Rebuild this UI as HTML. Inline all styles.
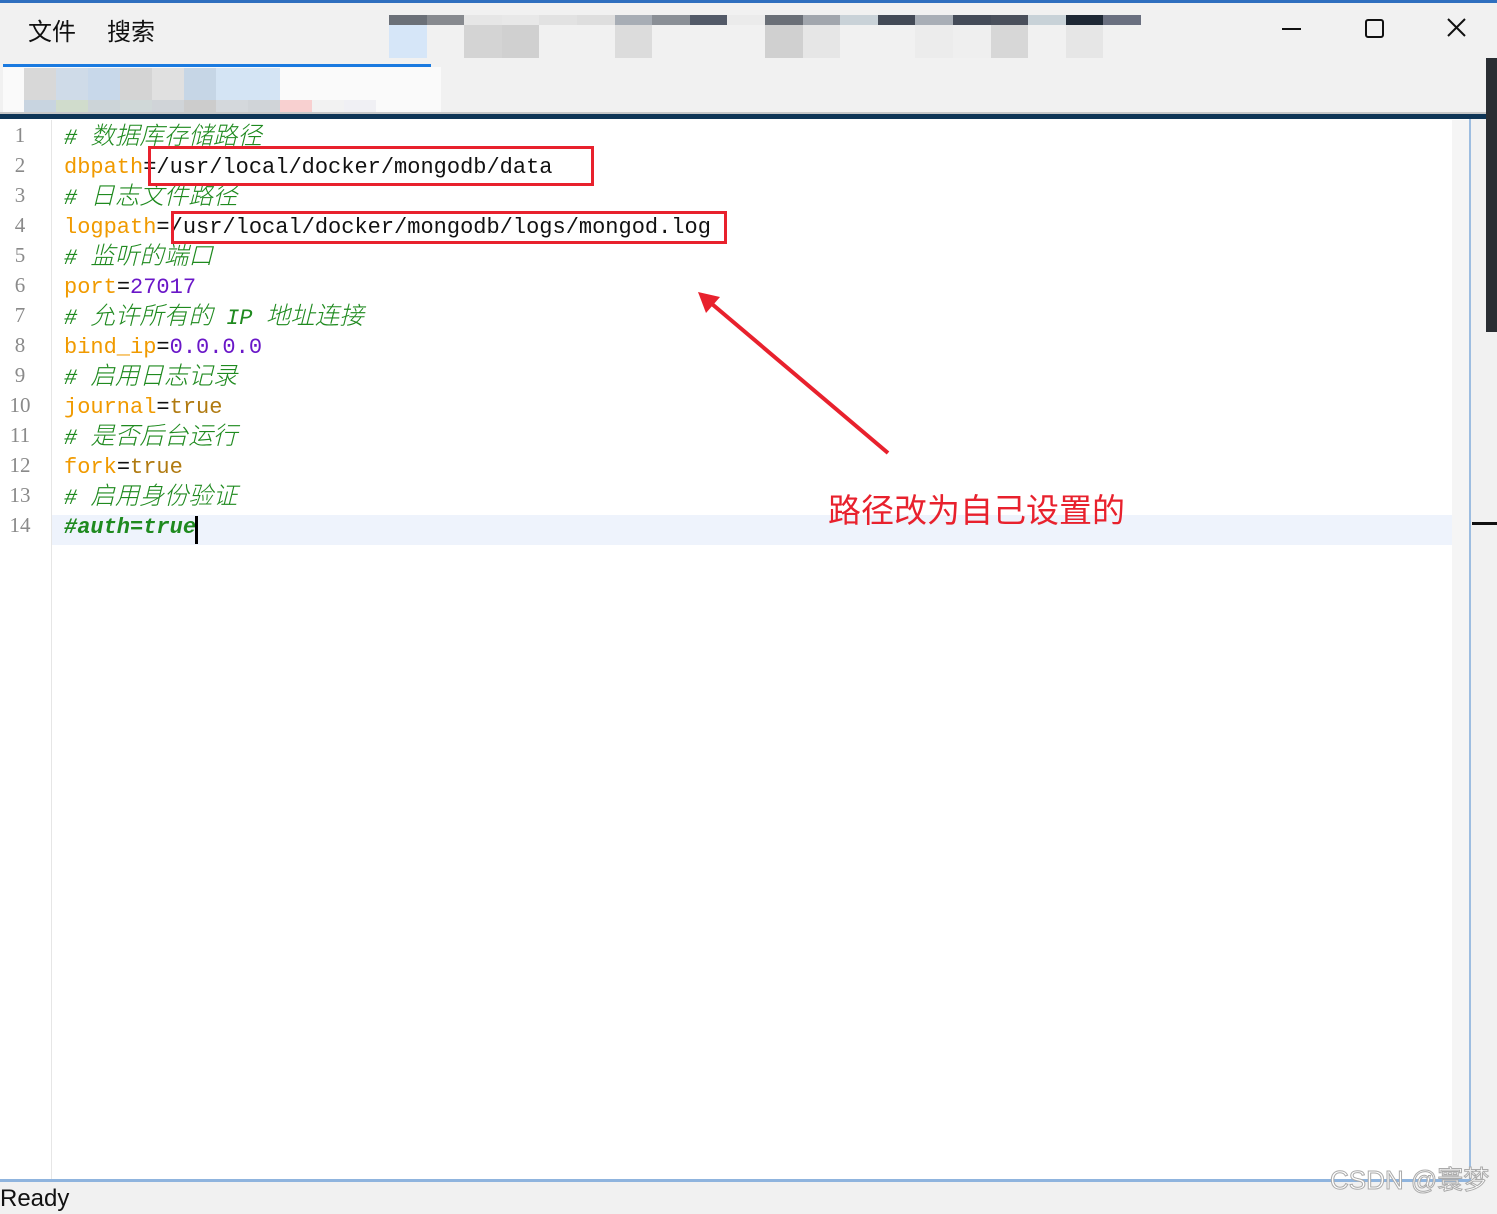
<!DOCTYPE html>
<html><head><meta charset="utf-8"><style>
*{margin:0;padding:0;box-sizing:border-box}
html,body{width:1497px;height:1205px}
body{background:#f1f1f1;position:relative;overflow:hidden;font-family:"Liberation Sans","Noto Sans CJK SC",sans-serif}
.abs{position:absolute}
.row{display:flex;position:absolute}
.row div{flex:1}
.code{position:absolute;left:64px;font-family:"Liberation Mono","Noto Sans CJK SC",monospace;font-size:22px}
.code div{height:30px;line-height:30px;overflow:visible;white-space:pre}
.ln{position:absolute;left:0;width:40px;text-align:center;font-family:"Liberation Serif",serif;font-size:21px;color:#8a8a8a;line-height:30px}
.c{color:#1f8a1f;font-style:italic}
.z{font-size:24.5px;font-family:"Noto Sans CJK SC",sans-serif;font-weight:300;line-height:1;vertical-align:baseline}
.k{color:#f09a00}
.n{color:#6a17c8}
.t{color:#b07a10}
.b{color:#111}
</style></head><body>
<div class="abs" style="left:0;top:0;width:1497px;height:3px;background:#2f6fbf"></div>
<div class="abs" style="left:28px;top:12px;font-size:24px;color:#111">文件</div>
<div class="abs" style="left:107px;top:12px;font-size:24px;color:#111">搜索</div>
<div class="row" style="left:389px;top:15px;width:752px;height:10px">
<div style="background:#6b7078"></div><div style="background:#878a8f"></div><div style="background:#e6e6e6"></div><div style="background:#e8e8e8"></div><div style="background:#e2e2e2"></div><div style="background:#dedede"></div><div style="background:#a7adb5"></div><div style="background:#8a8f96"></div><div style="background:#535a68"></div><div style="background:#ebebeb"></div><div style="background:#6a6f77"></div><div style="background:#a1a6ad"></div><div style="background:#c9d2d8"></div><div style="background:#434a56"></div><div style="background:#a8aeb6"></div><div style="background:#444b58"></div><div style="background:#4a505c"></div><div style="background:#c8d2d8"></div><div style="background:#1e2835"></div><div style="background:#6a7080"></div></div>
<div class="row" style="left:389px;top:25px;width:752px;height:33px">
<div style="background:#d6e6f8"></div><div></div><div style="background:#d4d4d4"></div><div style="background:#d0d0d0"></div><div></div><div></div><div style="background:#dcdcdc"></div><div></div><div></div><div></div><div style="background:#d0d0d0"></div><div style="background:#e6e6e6"></div><div></div><div></div><div style="background:#ececec"></div><div style="background:#efefef"></div><div style="background:#d7d7d7"></div><div></div><div style="background:#e6e6e6"></div><div></div></div>
<svg class="abs" style="left:1270px;top:14px" width="210" height="30"><path d="M12 15H31" stroke="#111" stroke-width="2"/><rect x="96" y="6" width="17" height="17" rx="2" fill="none" stroke="#111" stroke-width="2"/><path d="M178 5L195 22M195 5L178 22" stroke="#111" stroke-width="2"/></svg>
<div class="abs" style="left:3px;top:64px;width:428px;height:3px;background:#1a7ae0"></div>
<div class="abs" style="left:3px;top:67px;width:438px;height:49px;background:#fafafa"></div>
<div class="row" style="left:24px;top:68px;width:256px;height:32px">
<div style="background:#d8d8d8"></div><div style="background:#cfdbe8"></div><div style="background:#c8d8ea"></div><div style="background:#d4d4d4"></div><div style="background:#e0e0e0"></div><div style="background:#c6d6e6"></div><div style="background:#d4e4f4"></div><div style="background:#d4e4f4"></div></div>
<div class="row" style="left:24px;top:100px;width:384px;height:16px">
<div style="background:#c8d4e0"></div><div style="background:#d0dccc"></div><div style="background:#ccd4d8"></div><div style="background:#d0d8d8"></div><div style="background:#d0d4d8"></div><div style="background:#cccccc"></div><div style="background:#d4d8dc"></div><div style="background:#d0d4d8"></div><div style="background:#f8d0d0"></div><div style="background:#f2f2f2"></div><div style="background:#f0f0f4"></div><div style="background:#fafafa"></div></div>
<div class="abs" style="left:0;top:112px;width:1486px;height:2px;background:#c8c8c8"></div>
<div class="abs" style="left:0;top:114px;width:1486px;height:5px;background:#0e3556"></div>
<div class="abs" style="left:1486px;top:58px;width:11px;height:274px;background:#2a2e33"></div>
<div class="abs" style="left:1472px;top:522px;width:25px;height:3px;background:#111"></div>
<div class="abs" style="left:0;top:119px;width:1471px;height:1061px;background:#fff;border-right:2px solid #9dbde0"></div>
<div class="abs" style="left:1452px;top:120px;width:17px;height:1060px;background:#f5f5f5"></div>
<div class="abs" style="left:51px;top:120px;width:1px;height:1060px;background:#e6e6e6"></div>
<div class="abs" style="left:52px;top:515px;width:1400px;height:30px;background:#eef3fc"></div>
<div class="ln" style="top:120px">1<br>2<br>3<br>4<br>5<br>6<br>7<br>8<br>9<br>10<br>11<br>12<br>13<br>14</div>
<div class="code" style="top:123px"><div><span class="c"># <span class="z">数据库存储路径</span></span></div><div><span class="k">dbpath</span><span class="b">=/usr/local/docker/mongodb/data</span></div><div><span class="c"># <span class="z">日志文件路径</span></span></div><div><span class="k">logpath</span><span class="b">=/usr/local/docker/mongodb/logs/mongod.log</span></div><div><span class="c"># <span class="z">监听的端口</span></span></div><div><span class="k">port</span><span class="b">=</span><span class="n">27017</span></div><div><span class="c"># <span class="z">允许所有的</span> IP <span class="z">地址连接</span></span></div><div><span class="k">bind_ip</span><span class="b">=</span><span class="n">0.0.0.0</span></div><div><span class="c"># <span class="z">启用日志记录</span></span></div><div><span class="k">journal</span><span class="b">=</span><span class="t">true</span></div><div><span class="c"># <span class="z">是否后台运行</span></span></div><div><span class="k">fork</span><span class="b">=</span><span class="t">true</span></div><div><span class="c"># <span class="z">启用身份验证</span></span></div><div><span class="c" style="font-weight:bold">#auth=true</span></div></div>
<div class="abs" style="left:195px;top:516px;width:3px;height:28px;background:#000"></div>
<div class="abs" style="left:148px;top:146px;width:446px;height:40px;border:3px solid #e8212d"></div>
<div class="abs" style="left:171px;top:211px;width:556px;height:33px;border:3px solid #e8212d"></div>
<svg class="abs" style="left:0;top:0" width="1497" height="1205"><path d="M888 453L712 304" stroke="#e8212d" stroke-width="4"/><polygon points="698,292 720,297 706,313" fill="#e8212d"/></svg>
<div class="abs" style="left:828px;top:484px;font-size:33px;color:#e8212d">路径改为自己设置的</div>
<div class="abs" style="left:0;top:1179px;width:1471px;height:3px;background:#8fb4de"></div>
<div class="abs" style="left:0;top:1184px;font-size:24px;color:#111;line-height:30px">Ready</div>
<div class="abs" style="left:1330px;top:1160px;font-size:26px;color:#fff;-webkit-text-stroke:1px #aaa">CSDN @寰梦</div>
</body></html>
